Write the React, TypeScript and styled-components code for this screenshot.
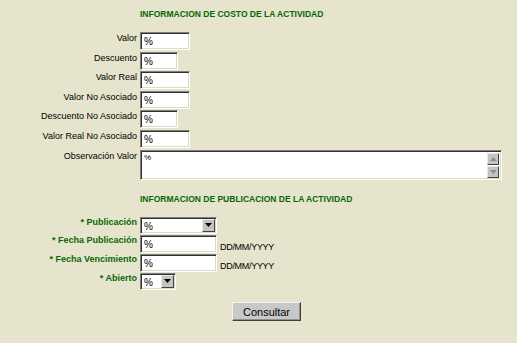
import { Fragment } from 'react';
import type { FC } from 'react';
import styled, { createGlobalStyle } from 'styled-components';

const GlobalStyle = createGlobalStyle`
  body {
    margin: 0;
    background: #e6e4cc;
    font-family: 'Liberation Sans', Arial, sans-serif;
  }
`;

const Page = styled.div`
  width: 517px;
  height: 343px;
  padding-top: 9px;
  box-sizing: border-box;
  background: #e6e4cc;
  display: flex;
  flex-direction: column;
`;

const SectionTitle = styled.div<{ $top: number }>`
  margin: ${(p) => p.$top}px 0 0 140px;
  font-size: 8.5px;
  line-height: 11px;
  height: 11px;
  font-weight: bold;
  color: #066806;
`;

const FormGrid = styled.div<{ $top: number; $gap: number }>`
  margin-top: ${(p) => p.$top}px;
  display: grid;
  grid-template-columns: 137px auto;
  column-gap: 3px;
  row-gap: ${(p) => p.$gap}px;
  align-items: start;
`;

const Label = styled.div<{ $required?: boolean }>`
  text-align: right;
  font-size: 9px;
  line-height: 11px;
  padding-top: ${(p) => (p.$required ? 0 : 1)}px;
  white-space: nowrap;
  color: ${(p) => (p.$required ? '#066806' : '#000')};
  font-weight: ${(p) => (p.$required ? 'bold' : 'normal')};
`;

const FieldRow = styled.div`
  display: flex;
  align-items: flex-end;
  gap: 3px;
`;

const TextBox = styled.div<{ $w: number; $h?: number }>`
  width: ${(p) => p.$w}px;
  height: ${(p) => p.$h ?? 18}px;
  box-sizing: border-box;
  background: #fff;
  border-top: 1px solid #808080;
  border-left: 1px solid #808080;
  border-right: 1px solid #ffffff;
  border-bottom: 1px solid #ffffff;
  box-shadow: inset 1px 1px 0 #303030, inset -1px -1px 0 #dedbc4;
  font-size: 10px;
  line-height: 14px;
  padding: 2px 0 0 3px;
  color: #000;
  display: flex;
`;

const Hint = styled.span`
  font-size: 9px;
  line-height: 10px;
  color: #000;
  margin-bottom: 1px;
  letter-spacing: -0.3px;
`;

const AreaText = styled.div`
  flex: 1;
  font-size: 8px;
  line-height: 10px;
`;

const ScrollCol = styled.div`
  width: 12px;
  display: flex;
  flex-direction: column;
  gap: 1px;
  margin: 0 2px 0 0;
`;

const ScrollBtn = styled.div`
  height: 12px;
  box-sizing: border-box;
  background: #c4c4c4;
  border-top: 1px solid #e8e8e8;
  border-left: 1px solid #e8e8e8;
  border-right: 1px solid #404040;
  border-bottom: 1px solid #404040;
  display: flex;
  align-items: center;
  justify-content: center;
`;

const SelectValue = styled.span`
  flex: 1;
`;

const DropBtn = styled.div`
  width: 13px;
  height: 13px;
  margin: -1px 1px 0 0;
  box-sizing: border-box;
  background: #c4c4c4;
  border-top: 1px solid #ececec;
  border-left: 1px solid #ececec;
  border-right: 1px solid #404040;
  border-bottom: 1px solid #404040;
  display: flex;
  align-items: center;
  justify-content: center;
`;

const ButtonRow = styled.div`
  margin: 12px 0 0 232px;
`;

const Button = styled.button`
  width: 69px;
  height: 19px;
  box-sizing: border-box;
  padding: 0;
  background: #c8c8c8;
  border-top: 1px solid #f2f2f2;
  border-left: 1px solid #f2f2f2;
  border-right: 1px solid #404040;
  border-bottom: 1px solid #404040;
  box-shadow: inset -1px -1px 0 #909090;
  font-family: 'Liberation Sans', Arial, sans-serif;
  font-size: 11px;
  color: #000;
`;

const Arrow: FC<{ up?: boolean; color: string }> = ({ up, color }) => (
  <svg width="7" height="4" viewBox="0 0 7 4" aria-hidden>
    <polygon points={up ? '0,4 7,4 3.5,0' : '0,0 7,0 3.5,4'} fill={color} />
  </svg>
);

const Select: FC<{ w: number }> = ({ w }) => (
  <TextBox $w={w} $h={17}>
    <SelectValue>%</SelectValue>
    <DropBtn>
      <Arrow color="#000" />
    </DropBtn>
  </TextBox>
);

const costRows: [string, number][] = [
  ['Valor', 50],
  ['Descuento', 38],
  ['Valor Real', 50],
  ['Valor No Asociado', 50],
  ['Descuento No Asociado', 38],
  ['Valor Real No Asociado', 50],
];

export default function App() {
  return (
    <Page>
      <GlobalStyle />
      <SectionTitle $top={0}>INFORMACION DE COSTO DE LA ACTIVIDAD</SectionTitle>
      <FormGrid $top={12} $gap={1.6}>
        {costRows.map(([label, w]) => (
          <Fragment key={label}>
            <Label>{label}</Label>
            <TextBox $w={w}>%</TextBox>
          </Fragment>
        ))}
        <Label>Observación Valor</Label>
        <TextBox $w={362} $h={30}>
          <AreaText>%</AreaText>
          <ScrollCol>
            <ScrollBtn>
              <Arrow up color="#8e8e8e" />
            </ScrollBtn>
            <ScrollBtn>
              <Arrow color="#8e8e8e" />
            </ScrollBtn>
          </ScrollCol>
        </TextBox>
      </FormGrid>
      <SectionTitle $top={14}>INFORMACION DE PUBLICACION DE LA ACTIVIDAD</SectionTitle>
      <FormGrid $top={12} $gap={1}>
        <Label $required>* Publicación</Label>
        <Select w={77} />
        <Label $required>* Fecha Publicación</Label>
        <FieldRow>
          <TextBox $w={77}>%</TextBox>
          <Hint>DD/MM/YYYY</Hint>
        </FieldRow>
        <Label $required>* Fecha Vencimiento</Label>
        <FieldRow>
          <TextBox $w={77}>%</TextBox>
          <Hint>DD/MM/YYYY</Hint>
        </FieldRow>
        <Label $required>* Abierto</Label>
        <Select w={36} />
      </FormGrid>
      <ButtonRow>
        <Button>Consultar</Button>
      </ButtonRow>
    </Page>
  );
}
